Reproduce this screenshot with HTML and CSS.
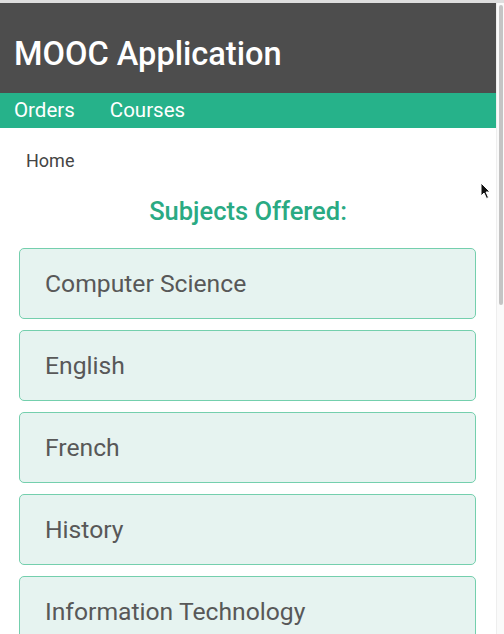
FILE: index.html
```html
<!DOCTYPE html>
<html lang="en">
<head>
<meta charset="utf-8">
<title>MOOC Application</title>
<link rel="stylesheet" href="styles.css">
</head>
<body>
<div class="topline"></div>
<div class="frame">
  <div class="page">
    <header class="appbar">
      <h1 class="title">MOOC Application</h1>
    </header>
    <nav class="nav">
      <a class="nav-link" href="#">Orders</a>
      <a class="nav-link" href="#">Courses</a>
    </nav>
    <div class="crumb">Home</div>
    <h2 class="heading">Subjects Offered:</h2>
    <ul class="subjects">
      <li class="subject">Computer Science</li>
      <li class="subject">English</li>
      <li class="subject">French</li>
      <li class="subject">History</li>
      <li class="subject">Information Technology</li>
    </ul>
  </div>
  <div class="scrollbar"><div class="thumb"></div></div>
</div>
<svg class="cursor" width="12" height="18" viewBox="0 0 12 18"><path d="M1 1 L1 14 L4 11 L6.5 16.5 L8.5 15.5 L6 10 L10 10 Z" fill="#111" stroke="#fff" stroke-width="1"/></svg>
</body>
</html>
```
FILE: styles.css
```css
html, body {
  margin: 0;
  padding: 0;
  height: 100%;
  overflow: hidden;
  background: #ffffff;
  font-family: Roboto, "Liberation Sans", Arial, sans-serif;
}
.topline {
  height: 3px;
  background: #dedede;
}
.frame {
  display: flex;
  height: 631px;
  position: relative;
}
.page {
  width: 496px;
  flex: none;
}
.appbar {
  background: #4d4d4d;
  height: 90px;
  box-sizing: border-box;
  padding: 32px 0 0 14px;
}
.title {
  margin: 0;
  color: #ffffff;
  font-size: 32.6px;
  font-weight: 500;
  line-height: 38px;
}
.nav {
  background: #26b28a;
  height: 35px;
  display: flex;
  gap: 35px;
  padding-left: 14px;
}
.nav-link {
  color: #ffffff;
  text-decoration: none;
  font-size: 20.5px;
  line-height: 35px;
}
.crumb {
  margin: 23px 0 0 26px;
  font-size: 18px;
  line-height: 20px;
  color: #444444;
}
.heading {
  margin: 26px 0 0 0;
  text-align: center;
  color: #2aaa83;
  font-size: 25.5px;
  font-weight: 500;
  line-height: 28px;
}
.subjects {
  list-style: none;
  margin: 23px 20px 0 19px;
  padding: 0;
  display: flex;
  flex-direction: column;
  gap: 11px;
}
.subject {
  height: 69px;
  border: 1px solid #74cfad;
  border-radius: 5px;
  background: #e6f3f0;
  display: flex;
  align-items: center;
  padding-left: 25px;
  font-size: 24.7px;
  line-height: 28px;
  color: #585858;
}
.scrollbar {
  flex: 1;
  background: #fafafa;
  border-left: 1px solid #eeeeee;
  padding: 2px 1px 0 2px;
}
.thumb {
  height: 300px;
  border-radius: 3px;
  background: #c4c4c4;
}
.cursor {
  position: absolute;
  left: 480px;
  top: 182px;
}
```
